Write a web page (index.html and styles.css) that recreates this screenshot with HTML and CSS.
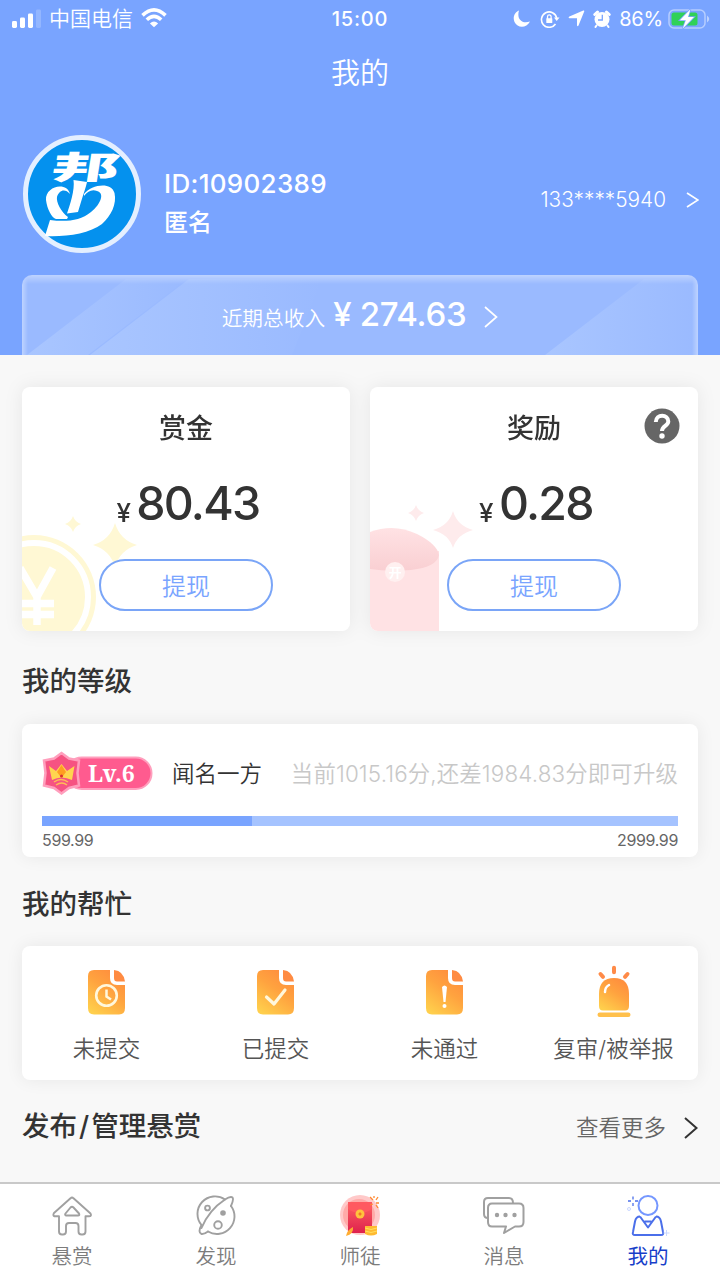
FILE: index.html
```html
<!DOCTYPE html>
<html lang="zh-CN">
<head>
<meta charset="utf-8">
<title>我的</title>
<link rel="stylesheet" href="styles.css">
</head>
<body>
<header class="hero">
  <div class="status">
    <div class="status-left">
      <svg width="30" height="20" viewBox="0 0 30 20" fill="#fff"><rect y="12" width="5" height="7" rx="1.4"/><rect x="8" y="8.500" width="5" height="10.500" rx="1.400"/><rect x="16" y="4.500" width="5" height="14.500" rx="1.400"/><rect x="24" y="0.500" width="5" height="18.500" rx="1.400" opacity=".2"/></svg>
      <span class="carrier">中国电信</span>
      <svg class="wifi" width="26" height="20" viewBox="0 0 26 20" fill="none" stroke="#fff" stroke-width="3.600"><path d="M1.500 7.400Q13-3.600 24.500 7.400"/><path d="M5.800 11.700Q13 5 20.200 11.700"/><path d="M13 19.300L8.900 15.400Q13 11.800 17.100 15.400Z" fill="#fff" stroke="none"/></svg>
    </div>
    <div class="clock">15:00</div>
    <div class="status-right">
      <svg width="18" height="18" viewBox="0 0 18 18"><path d="M6 .5C3.500 8.500 8.500 14.500 17 11.500C13.500 18.500 4.500 18.500 1.500 12C-.7 7 2 2 6 .5Z" fill="#fff"/></svg>
      <svg class="rotation" width="20" height="18" viewBox="0 0 20 18" fill="none" stroke="#fff" stroke-width="1.600"><path d="M15.500 14A7.700 7.700 0 1 1 16.700 8"/><path d="M14 7.500H19.500L16.700 11Z" fill="#fff" stroke="none"/><rect x="6.300" y="8.200" width="6" height="4.800" rx=".6" fill="#fff" stroke="none"/><path d="M7.500 9V6.700a1.800 1.800 0 0 1 3.600 0V9" stroke-width="1.300"/></svg>
      <svg class="locate" width="17" height="17" viewBox="0 0 17 17" fill="#fff"><path d="M15.300.6Q16.700.1 16.200 1.600L10.500 15.600Q9.700 17 9 15.500V8.200H1.600Q-.2 7.500 1.400 6.600Z"/></svg>
      <svg class="alarm" width="18" height="18" viewBox="0 0 18 18"><circle cx="9" cy="9.500" r="7.500" fill="#fff"/><path d="M1.800 4.500L4.500 2M16.200 4.500L13.500 2" stroke="#fff" stroke-width="3" stroke-linecap="round"/><path d="M3.500 15.500L2.500 17M14.500 15.500L15.500 17" stroke="#fff" stroke-width="2" stroke-linecap="round"/><path d="M9.300 4.800V10H5" fill="none" stroke="#79a4ff" stroke-width="1.300"/></svg>
      <span class="percent">86%</span>
      <svg class="battery" width="43" height="20" viewBox="0 0 43 20"><rect x="1" y="1" width="36" height="18" rx="5" fill="none" stroke="#fff" stroke-opacity=".45" stroke-width="1.500"/><path d="M39 6.500Q43.500 10 39 13.500Z" fill="#fff" opacity=".5"/><rect x="3.500" y="3.500" width="26" height="13" rx="2.500" fill="#30d158"/><path d="M22.500.3L11.800 11.300H17.800L14.800 19.600L26 8H20Z" fill="#fff" stroke="#79a4ff" stroke-width="1.600" paint-order="stroke"/></svg>
    </div>
  </div>
  <h1 class="title">我的</h1>
  <div class="profile">
    <svg class="avatar" width="118" height="118" viewBox="23 135 118 118">
      <circle cx="82" cy="194" r="56.500" fill="#0491ee" stroke="#e4efff" stroke-width="5"/>
      <text class="logo-text" transform="translate(50 178.500) skewX(-9) scale(1.800 .84)">邦</text>
      <g fill="#fff"><path d="M73.500 180L87 182C86 187 83 195 78 212L67 213.500C70 205 75 190 73.500 180Z"/><path d="M70 194C67 181 45 186 46 200C47 209 52 218 56 219H67L68 217C61 212 56 202 57 197C59 190 65 188 70 194Z"/><path d="M84 194C91 185 111 181 114.500 193C117 204 111 216 102 224C89 234 65 237 45 236L50 220C66 222 80 221 91 212C101 204 105 193 97 191C92 189 88 191 84 196Z"/></g>
    </svg>
    <div class="identity"><div class="uid">ID:10902389</div><div class="nick">匿名</div></div>
    <div class="phone">133****5940</div>
    <svg class="phone-arrow" width="13" height="16" viewBox="0 0 13 16" fill="none" stroke="#fff" stroke-width="1.700"><path d="M1 1L12 8L1 15"/></svg>
  </div>
  <div class="income">
    <svg class="shine" width="676" height="80" viewBox="0 0 676 80"><defs><linearGradient id="ray" x1="0" x2="1"><stop stop-color="#bcd4ff" stop-opacity=".45"/><stop offset="1" stop-color="#bcd4ff" stop-opacity="0"/></linearGradient></defs><path d="M104 4H165L66 80H5Z" fill="url(#ray)"/><path d="M167 4H300L270 80H68Z" fill="url(#ray)"/><path d="M622 4H676V80H523Z" fill="url(#ray)"/></svg>
    <span class="income-label">近期总收入</span><span class="income-value">¥ 274.63</span>
    <svg class="income-arrow" width="14" height="22" viewBox="0 0 14 22" fill="none" stroke="#fff" stroke-width="1.700"><path d="M1 1L12.500 11L1 21"/></svg>
  </div>
</header>
<main class="content">
  <section class="wallets">
    <article class="card wallet">
      <svg class="wallet-art" width="130" height="120" viewBox="0 0 130 120" fill="#fff8d4"><circle cx="12" cy="86" r="62"/><circle cx="12" cy="86" r="54" fill="none" stroke="#fff" stroke-width="6"/><path d="M-2 57L15 86L31 57M15 86V114M-4 92.500H32M-4 103.500H32" fill="none" stroke="#fff" stroke-width="7.500"/><path d="M93 12Q98 29 115 34Q98 39 93 56Q88 39 71 34Q88 29 93 12Z"/><path d="M51 5Q53 11 59 13Q53 15 51 21Q49 15 43 13Q49 11 51 5Z"/></svg>
      <h2 class="wallet-title">赏金</h2>
      <div class="amount"><span class="yen">¥</span>80.43</div>
      <button class="withdraw">提现</button>
    </article>
    <article class="card wallet">
      <svg class="wallet-art" width="130" height="130" viewBox="0 0 130 130"><defs><linearGradient id="flap" x2="0" y2="1"><stop stop-color="#ffe2e4"/><stop offset="1" stop-color="#f9cfd2"/></linearGradient></defs><path d="M0 50H69V130H0Z" fill="#ffe2e4"/><path d="M0 31Q24 22 47 33Q67 43 69 54Q67 66 41 69Q18 71 0 68Z" fill="url(#flap)"/><circle cx="25" cy="71" r="10" fill="#fff0f0"/><text x="25" y="76" class="seal">开</text><g fill="#feebec"><path d="M83 10Q87.500 25 103 29Q87.500 33 83 47Q78.500 33 63 29Q78.500 25 83 10Z"/><path d="M46 4Q48 10 54 12Q48 14 46 20Q44 14 38 12Q44 10 46 4Z"/></g></svg>
      <h2 class="wallet-title">奖励</h2>
      <svg class="help" width="36" height="36" viewBox="0 0 36 36"><circle cx="18" cy="18" r="17.500" fill="#666"/><path d="M11.800 14C12 5.500 24.500 6 24.300 13.500C24.200 18 18 18 18 23" fill="none" stroke="#fff" stroke-width="4"/><circle cx="18" cy="28" r="2.700" fill="#fff"/></svg>
      <div class="amount"><span class="yen">¥</span>0.28</div>
      <button class="withdraw">提现</button>
    </article>
  </section>

  <h2 class="section-title level-title">我的等级</h2>
  <section class="card level">
    <div class="level-row">
      <svg class="badge" width="112" height="44" viewBox="0 0 112 44"><rect x="24" y="6.500" width="85.500" height="31.500" rx="15.750" fill="#ff5b8f" stroke="#ff9fbd" stroke-width="2"/><path d="M19.500 2L27 7.500L37 9.500L35.500 22L37 34.500L27 37L19.500 42.500L12 37L2 34.500L3.500 22L2 9.500L12 7.500Z" fill="#f65382" stroke="#ff9fbd" stroke-width="2.500"/><path d="M7 15L14 20L19.500 13L25 20L32.500 15L30 29Q19.500 24 10 29Z" fill="#ffd54f"/><path d="M19.500 14L24 21L19.500 27L15 21Z" fill="#ff9d22"/><path d="M12 31Q19 26 26 31M14 34Q20 30 25 34" fill="none" stroke="#ffbd57" stroke-width="1.500"/><circle cx="19.500" cy="25" r="1.500" fill="#d92e31"/><text x="46" y="31" class="badge-text">Lv.6</text></svg>
      <span class="rank">闻名一方</span><span class="progress-text">当前1015.16分,还差1984.83分即可升级</span>
    </div>
    <div class="track"><div class="fill" style="width:33%"></div></div>
    <div class="range"><span>599.99</span><span>2999.99</span></div>
  </section>

  <h2 class="section-title tasks-title">我的帮忙</h2>
  <section class="card tasks">
    <svg width="0" height="0" class="defs"><defs><linearGradient id="orange" x1=".8" y1="0" x2=".2" y2="1"><stop stop-color="#ff8b3d"/><stop offset=".45" stop-color="#ffa33f"/><stop offset="1" stop-color="#ffcf4c"/></linearGradient><symbol id="doc" viewBox="0 0 37 45"><path d="M6 0H22V8Q22 15 29 15H37V38Q37 44.500 31 44.500H6Q0 44.500 0 38V6Q0 0 6 0Z" fill="url(#orange)"/><path d="M26 0Q35.500 1 37 11.500H29Q26 11.500 26 8Z" fill="#ff8b42"/></symbol></defs></svg>
    <div class="task"><svg class="task-icon" width="44" height="58" viewBox="-3 -5 44 58"><use href="#doc" width="37" height="45"/><circle cx="18.500" cy="25.500" r="10.300" fill="none" stroke="#fff7dc" stroke-width="2.600"/><path d="M18.500 19.500V26.500L23 29.500" fill="none" stroke="#fff7dc" stroke-width="2.500"/></svg><span>未提交</span></div>
    <div class="task"><svg class="task-icon" width="44" height="58" viewBox="-3 -5 44 58"><use href="#doc" width="37" height="45"/><path d="M9.500 27L17 34L28 20" fill="none" stroke="#fff7dc" stroke-width="3.200" stroke-linecap="round" stroke-linejoin="round"/></svg><span>已提交</span></div>
    <div class="task"><svg class="task-icon" width="44" height="58" viewBox="-3 -5 44 58"><use href="#doc" width="37" height="45"/><path d="M16 17Q18.500 14 21 17L19.500 32H17.500Z" fill="#fff"/><circle cx="18.500" cy="36" r="2" fill="#fff"/></svg><span>未通过</span></div>
    <div class="task"><svg class="task-icon" width="44" height="58" viewBox="-3 -5 44 58"><path d="M4 24Q4 8 19 8T34 24V36Q34 40.500 30 40.500H8Q4 40.500 4 36Z" fill="url(#orange)"/><path d="M5.500 4L8 6.800M19-2.200V2.200M32.500 4L30 6.800" stroke="#ff8b48" stroke-width="4" stroke-linecap="round"/><rect x="2.500" y="42.500" width="33" height="4.500" rx="2.200" fill="#ffc04c"/><path d="M10 22Q10 17 14 15" fill="none" stroke="#fff" stroke-width="2.500" stroke-linecap="round"/></svg><span>复审/被举报</span></div>
  </section>

  <div class="manage"><h2 class="section-title">发布<span class="slash">/</span>管理悬赏</h2><span class="more">查看更多</span><svg width="14" height="22" viewBox="0 0 14 22" fill="none" stroke="#333" stroke-width="2"><path d="M1 1L12.500 11L1 21"/></svg></div>
</main>
<nav class="tabs">
  <a class="tab"><svg width="44" height="44" viewBox="0 0 44 44" fill="none" stroke="#a0a0a0" stroke-width="1.900" stroke-linejoin="round"><path d="M20.500 3.300Q22 1.700 23.500 3.300L40.500 18.500Q42 21.300 39 21.300H35.500V36.500Q35.500 39.500 32.500 39.500H31.500Q28.500 39.500 28.500 36.500V31Q28.500 28 25.500 28H19Q16 28 16 31V36.500Q16 39.500 13 39.500H12Q9 39.500 9 36.500V21.300H4.500Q2.500 20.500 4 18Z"/><path d="M20.500 12.500Q22 11 23.500 12.500L29 18.500Q30 20.500 28 20.500H16Q14.500 20 15.500 18.500Z"/></svg><span>悬赏</span></a>
  <a class="tab"><svg width="44" height="44" viewBox="0 0 44 44" fill="none" stroke="#a0a0a0" stroke-width="1.900" stroke-linecap="round"><path d="M31 4.500A17.500 17.500 0 0 0 7.500 30M14 36.500A17.500 17.500 0 0 0 37 11"/><path d="M7.500 30Q3.500 37.500 7.500 39Q10 39.500 14 36.500M37 11Q40 4.500 38.500 2.500Q36.500 .8 31 4.500Q15 15 7.500 33"/><circle cx="13.500" cy="13" r="2.400"/><circle cx="24" cy="30" r="3.800"/><circle cx="29" cy="18" r="2.800" fill="#a0a0a0" stroke="none"/></svg><span>发现</span></a>
  <a class="tab"><svg width="44" height="44" viewBox="0 0 44 44"><defs><linearGradient id="envelope" x2="0" y2="1"><stop stop-color="#ff6362"/><stop offset="1" stop-color="#de214d"/></linearGradient></defs><g transform="translate(0 -1)"><circle cx="22" cy="21" r="20" fill="#ffc9c9"/><circle cx="21" cy="21" r="16" fill="#ffaaa8"/><path d="M10 8H34V39H10Z" fill="url(#envelope)"/><path d="M10 15Q22 23 34 15V8H10Z" fill="#ff5960"/><circle cx="22" cy="20" r="4.500" fill="#ffc33d"/><path d="M22 18L23.800 20L22 22L20.200 20Z" fill="#f47727"/><path d="M27 32H39V40Q33 43 27 40Z" fill="#ffba31"/><path d="M27 34Q33 37 39 34M27 37Q33 40 39 37" fill="none" stroke="#ffe060"/><path d="M8 42Q9 36 15 33Q16 40 8 42Z" fill="#ffad32"/><path d="M35 6L32 3M36 4V2M38 6L40 3M38 9H41M35 10L32 11M38 11L40 14" stroke="#ff8a32" stroke-width="1.300"/></g></svg><span>师徒</span></a>
  <a class="tab"><svg width="44" height="44" viewBox="0 0 44 44" fill="none" stroke="#a0a0a0" stroke-width="2" stroke-linejoin="round"><path d="M6 23Q2 23 2 19V7Q2 3 6 3H27Q31 3 31 8"/><path d="M10 8.500H37Q41.500 8.500 41.500 13V27Q41.500 31.500 37 31.500H33L22 38L24 31.500H10Q6 31.500 6 27V13Q6 8.500 10 8.500Z"/><g fill="#a0a0a0" stroke="none"><circle cx="15" cy="20" r="2.200"/><circle cx="23.500" cy="20" r="2.200"/><circle cx="32.500" cy="20" r="2.200"/></g></svg><span>消息</span></a>
  <a class="tab active"><svg width="44" height="44" viewBox="0 0 44 44" fill="none" stroke="#4b6fea" stroke-width="2" stroke-linejoin="round"><circle cx="22" cy="10.500" r="9.500" stroke="#7597ff"/><path d="M14 21.500Q10 21.500 9 26.500L7 37Q6 40 9 40H35Q38 40 37 37L35 26.500Q34 21.500 30 21.500"/><path d="M14 21.500L22 32.500L30 21.500M18.500 26.500H25.500"/><path d="M7 1.500V4.500M7 8V11M2 6H5M9 6H12" stroke-width="1.300"/><circle cx="3" cy="14" r="1.500" stroke="#cad8ff" stroke-width="1"/><path d="M40.500 35V41M37.500 38H43.500" stroke="#cad8ff" stroke-width="1"/></svg><span>我的</span></a>
</nav>
</body>
</html>
```
FILE: styles.css
```css
* { box-sizing: border-box; }
body {
  margin: 0;
  width: 720px;
  height: 1280px;
  display: flex;
  flex-direction: column;
  overflow: hidden;
  background: #f8f8f8;
  color: #333;
  font-family: Inter, "Noto Sans CJK SC", sans-serif;
}
h1, h2 { margin: 0; }
svg { display: block; flex: none; }
.hero { height: 355px; flex: none; background: #79a4ff; color: #fff; }
.status {
  height: 37px;
  padding: 0 9px 0 12px;
  display: grid;
  grid-template-columns: 1fr 80px 1fr;
  align-items: center;
}
.status-left, .status-right { display: flex; align-items: center; }
.carrier { margin-left: 7px; font-size: 21px; line-height: 37px; font-weight: 350; }
.wifi { margin: -2px 0 0 8px; }
.clock { margin-left: -3px; text-align: center; font-size: 20px; font-weight: 500; letter-spacing: .8px; }
.status-right { justify-content: flex-end; }
.rotation { margin-left: 9px; }
.locate { margin-left: 8px; }
.alarm { margin-left: 8px; }
.percent { margin-left: 8px; font-size: 20px; letter-spacing: -.2px; }
.battery { margin-left: 5px; }
.title { height: 70px; padding-top: 2px; text-align: center; font-size: 29px; font-weight: 350; line-height: 70px; }
.profile { height: 118px; margin-top: 28px; padding: 0 21px 0 23px; display: flex; }
.logo-text { font: 900 38px "Noto Sans CJK SC", sans-serif; fill: #fff; }
.identity { margin: 31px 0 0 23px; }
.uid { font-size: 26px; line-height: 36px; font-weight: 500; letter-spacing: .3px; }
.nick { font-size: 24px; line-height: 41px; font-weight: 500; }
.phone { margin: 50px 0 0 auto; font-size: 20.800px; line-height: 30px; font-weight: 300; }
.phone-arrow { margin: 57px 0 0 20px; }
.income {
  position: relative;
  height: 80px;
  margin: 22px 22px 0;
  display: flex;
  justify-content: center;
  background:
    linear-gradient(#bed3ff, rgba(190,211,255,0)) 0 0 / 100% 9px no-repeat,
    linear-gradient(90deg, #bed3ff, rgba(190,211,255,0)) 0 0 / 6px 100% no-repeat,
    linear-gradient(270deg, #bed3ff, rgba(190,211,255,0)) 100% 0 / 6px 100% no-repeat,
    #9abaff;
  border-radius: 10px 10px 0 0;
  overflow: hidden;
}
.shine { position: absolute; inset: 0; }
.income-label, .income-value, .income-arrow { position: relative; }
.income-label { font-size: 20.700px; line-height: 87px; font-weight: 350; }
.income-value { margin-left: 8px; font-size: 33px; line-height: 78px; font-weight: 500; letter-spacing: -.3px; }
.income-arrow { margin: 31px 0 0 18px; }
.content { height: 827px; flex: none; padding: 32px 22px 0; }
.card { background: #fff; border-radius: 8px; box-shadow: 0 0 18px rgba(0,0,0,.07); }
.wallets { height: 244px; display: grid; grid-template-columns: 328px 328px; gap: 20px; filter: drop-shadow(0 0 9px rgba(0,0,0,.07)); }
.wallet { position: relative; overflow: hidden; display: flex; flex-direction: column; align-items: center; }
.wallets .wallet { box-shadow: none; }
.wallet-art { position: absolute; left: 0; bottom: 0; }
.seal { font: 700 13px "Noto Sans CJK SC", sans-serif; fill: #fff; text-anchor: middle; }
.wallet-title { padding-top: 22px; height: 62px; font-size: 27px; font-weight: 500; line-height: 40px; }
.amount { margin: 24px 0 0 4px; height: 60px; display: flex; align-items: baseline; line-height: 60px; font-size: 46.500px; font-weight: 500; letter-spacing: -1.700px; position: relative; }
.yen { margin-right: 7px; font-size: 26px; line-height: 30px; transform: translateY(2px); }
.withdraw { position: relative; margin-top: 26px; width: 174px; height: 52px; border: 2px solid #7aa5f7; border-radius: 26px; padding: 2px 0 0; background: #fff; color: #79a4ff; font: 350 24px/45px Inter, "Noto Sans CJK SC", sans-serif; }
.help { position: absolute; top: 21px; right: 18px; }
.section-title { font-size: 27.500px; font-weight: 500; line-height: 40px; }
.level-title { padding-top: 30px; height: 93px; }
.level { width: 676px; height: 133px; padding: 27px 20px 0; }
.level-row { height: 44px; display: flex; align-items: center; white-space: nowrap; }
.badge-text { font: 700 23px "Noto Serif", "DejaVu Serif", "Liberation Serif", serif; fill: #fff; }
.rank { margin: -3px 0 0 18px; font-size: 22.500px; font-weight: 350; }
.progress-text { margin: -3px 0 0 auto; color: #c8c8c8; font-size: 22.400px; font-weight: 350; letter-spacing: .15px; }
.track { margin-top: 21px; height: 10px; background: #a5c3ff; }
.fill { height: 100%; background: #79a4ff; }
.range { display: flex; justify-content: space-between; font-size: 16px; line-height: 28px; color: #666; letter-spacing: -.35px; }
.tasks-title { padding-top: 27px; height: 89px; }
.tasks { width: 676px; height: 134px; display: grid; grid-template-columns: repeat(4, 1fr); position: relative; }
.defs { position: absolute; }
.task { padding-top: 19px; display: flex; flex-direction: column; align-items: center; font-size: 22.500px; line-height: 34px; font-weight: 350; color: #555; white-space: nowrap; }
.task-icon { margin-bottom: 9px; }
.manage { height: 92px; display: flex; align-items: center; }
.slash { margin: 0 2px; }
.more { margin: 0 18px 0 auto; color: #666; font-size: 22.500px; font-weight: 350; }
.manage svg { margin-top: 4px; }
.tabs { height: 98px; flex: none; display: grid; grid-template-columns: repeat(5, 1fr); background: #fff; border-top: 2px solid #c9c9c9; }
.tab { padding-top: 11px; display: flex; flex-direction: column; align-items: center; color: #7c7c7c; font-size: 20.500px; line-height: 36px; font-weight: 350; }
.active { color: #163ec9; font-weight: 400; }
```
